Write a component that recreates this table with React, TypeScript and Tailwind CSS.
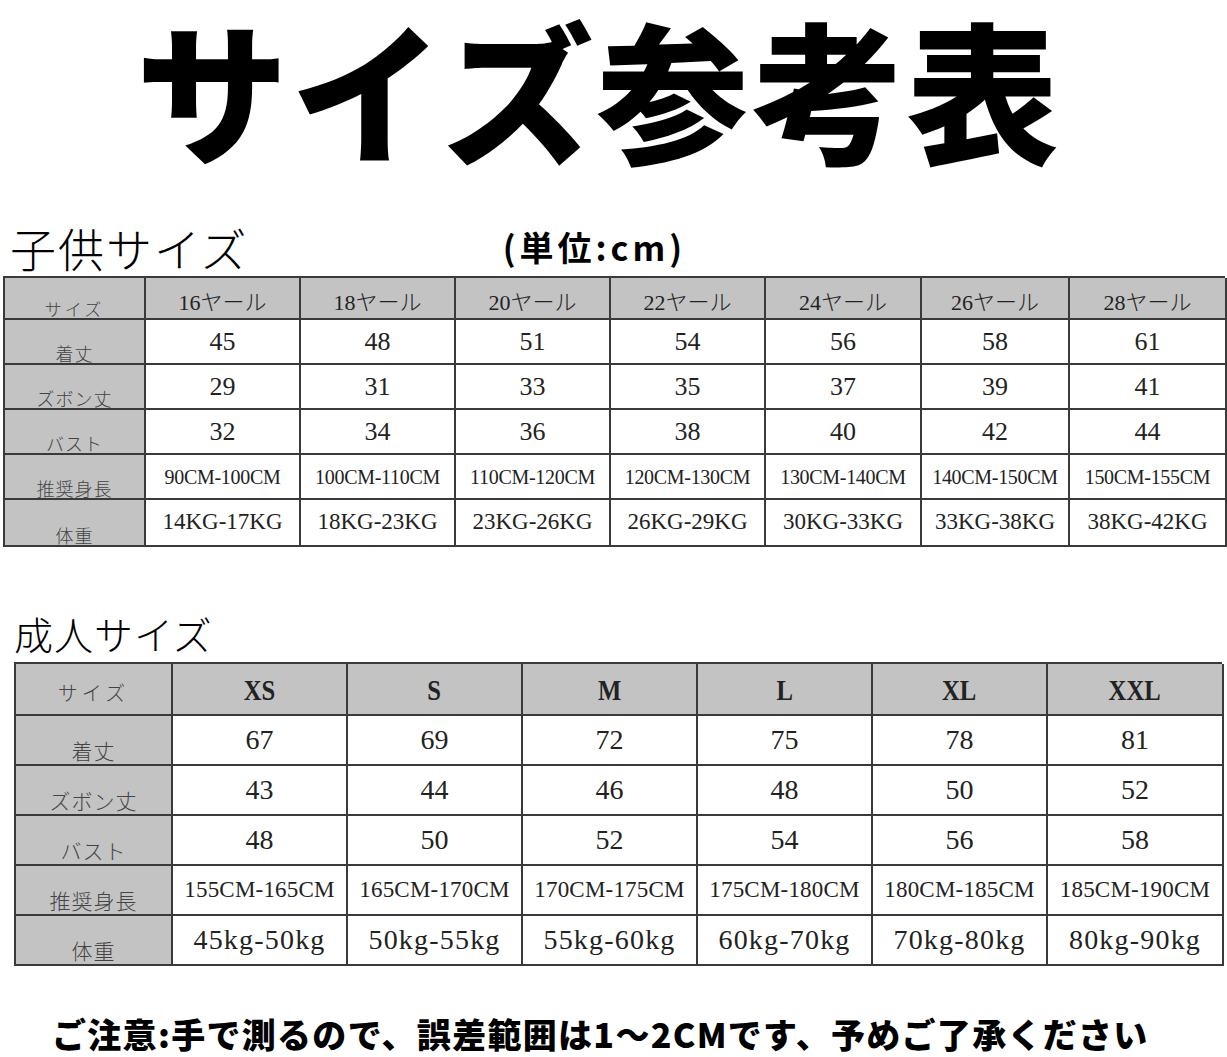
import React from "react";

const serif = "font-['Liberation_Serif','Noto_Sans_CJK_JP',serif]";
const sans = "font-['Noto_Sans_CJK_JP','Noto_Sans',sans-serif]";

const kidCols = ["16ヤール", "18ヤール", "20ヤール", "22ヤール", "24ヤール", "26ヤール", "28ヤール"];
const kidRows: { label: string; values: string[]; kind: "num" | "cm" | "kg" }[] = [
  { label: "着丈", values: ["45", "48", "51", "54", "56", "58", "61"], kind: "num" },
  { label: "ズボン丈", values: ["29", "31", "33", "35", "37", "39", "41"], kind: "num" },
  { label: "バスト", values: ["32", "34", "36", "38", "40", "42", "44"], kind: "num" },
  {
    label: "推奨身長",
    values: ["90CM-100CM", "100CM-110CM", "110CM-120CM", "120CM-130CM", "130CM-140CM", "140CM-150CM", "150CM-155CM"],
    kind: "cm",
  },
  {
    label: "体重",
    values: ["14KG-17KG", "18KG-23KG", "23KG-26KG", "26KG-29KG", "30KG-33KG", "33KG-38KG", "38KG-42KG"],
    kind: "kg",
  },
];

const adultCols = ["XS", "S", "M", "L", "XL", "XXL"];
const adultRows: { label: string; values: string[]; kind: "num" | "cm" | "kg" }[] = [
  { label: "着丈", values: ["67", "69", "72", "75", "78", "81"], kind: "num" },
  { label: "ズボン丈", values: ["43", "44", "46", "48", "50", "52"], kind: "num" },
  { label: "バスト", values: ["48", "50", "52", "54", "56", "58"], kind: "num" },
  {
    label: "推奨身長",
    values: ["155CM-165CM", "165CM-170CM", "170CM-175CM", "175CM-180CM", "180CM-185CM", "185CM-190CM"],
    kind: "cm",
  },
  {
    label: "体重",
    values: ["45kg-50kg", "50kg-55kg", "55kg-60kg", "60kg-70kg", "70kg-80kg", "80kg-90kg"],
    kind: "kg",
  },
];

const cell = "border-r-2 border-b-2 border-[#3a3a3a] flex justify-center overflow-hidden whitespace-nowrap";

function KidTable() {
  const kidSize = { num: "text-[26px]", cm: "text-[20px] tracking-[-0.3px]", kg: "text-[23px]" };
  return (
    <div className="ml-[3px] w-[1222px] grid grid-cols-[141px_155px_155px_155px_155px_156px_148px_157px] border-t-2 border-l-2 border-[#3a3a3a] text-[#222]">
      <div className={`${cell} h-[42px] bg-[#c3c3c3] items-end ${sans} font-light text-[17px] text-[#444] tracking-[3px]`}>
        <span className="translate-y-[3px]">サイズ</span>
      </div>
      {kidCols.map((c) => (
        <div key={c} className={`${cell} h-[42px] bg-[#c3c3c3] items-center pt-[8px] ${serif} text-[22px] font-light`}>
          {c}
        </div>
      ))}
      {kidRows.map((r, i) => (
        <React.Fragment key={r.label}>
          <div
            className={`${cell} ${i === 4 ? "h-[47px]" : "h-[45px]"} bg-[#c3c3c3] items-end ${sans} font-light text-[18px] text-[#444] tracking-[1px]`}
          >
            <span className="translate-y-[4px]">{r.label}</span>
          </div>
          {r.values.map((v, j) => (
            <div
              key={j}
              className={`${cell} ${i === 4 ? "h-[47px]" : "h-[45px]"} bg-white items-center ${serif} ${kidSize[r.kind]}`}
            >
              {v}
            </div>
          ))}
        </React.Fragment>
      ))}
    </div>
  );
}

function AdultTable() {
  const size = { num: "text-[28px]", cm: "text-[23px] tracking-[0.2px]", kg: "text-[28px] tracking-[1.2px]" };
  return (
    <div className="ml-[14px] w-[1208px] grid grid-cols-[157px_175px_175px_175px_175px_175px_176px] border-t-2 border-l-2 border-[#3a3a3a] text-[#222]">
      <div className={`${cell} h-[52px] bg-[#c3c3c3] items-center ${sans} font-light text-[20px] text-[#444] tracking-[4px]`}>
        <span className="translate-y-[4px]">サイズ</span>
      </div>
      {adultCols.map((c) => (
        <div key={c} className={`${cell} h-[52px] bg-[#c3c3c3] items-center ${serif} font-bold text-[29px]`}>
          <span className="inline-block translate-y-[2px] scale-x-[0.85]">{c}</span>
        </div>
      ))}
      {adultRows.map((r) => (
        <React.Fragment key={r.label}>
          <div className={`${cell} h-[50px] bg-[#c3c3c3] items-end ${sans} font-light text-[21px] text-[#444] tracking-[1px]`}>
            <span className="translate-y-[2px]">{r.label}</span>
          </div>
          {r.values.map((v, j) => (
            <div key={j} className={`${cell} h-[50px] bg-white items-center ${serif} ${size[r.kind]}`}>
              {v}
            </div>
          ))}
        </React.Fragment>
      ))}
    </div>
  );
}

export default function App() {
  return (
    <div className="w-[1227px] h-[1057px] bg-white overflow-hidden text-black">
      <div className="h-[200px] pl-[136px]">
        <h1 className={`${sans} font-black text-[152px] leading-[1.15] tracking-[3px] whitespace-nowrap`}>サイズ参考表</h1>
      </div>
      <div className="h-[76px] flex items-end pl-[10px]">
        <div className={`${sans} font-light text-[46px] leading-none tracking-[2px] pb-[6px]`}>子供サイズ</div>
        <div className={`${sans} font-bold text-[34px] leading-none tracking-[4px] ml-[254px] pb-[12px]`}>(単位:cm)</div>
      </div>
      <KidTable />
      <div className="h-[115px] flex items-end pl-[14px]">
        <div className={`${sans} font-light text-[39px] leading-none tracking-[1px] pb-[9px]`}>成人サイズ</div>
      </div>
      <AdultTable />
      <div className="pt-[51px] pl-[52px]">
        <p className={`${sans} font-black text-[34px] leading-none tracking-[1.3px] whitespace-nowrap`}>
          ご注意:手で測るので、誤差範囲は1～2CMです、予めご了承ください
        </p>
      </div>
    </div>
  );
}
